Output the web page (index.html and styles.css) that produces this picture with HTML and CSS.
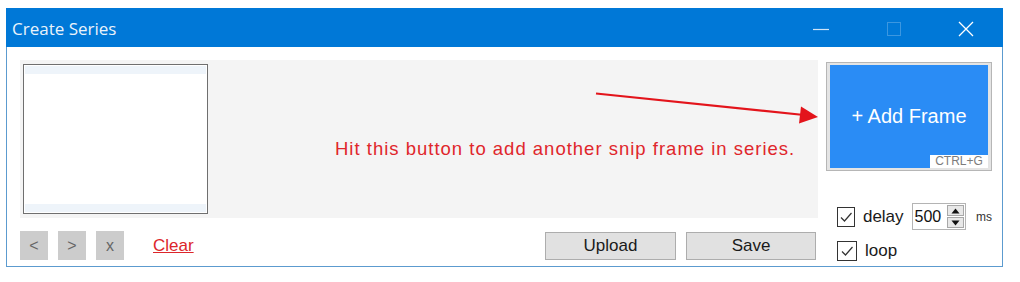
FILE: index.html
```html
<!DOCTYPE html>
<html lang="en">
<head>
<meta charset="utf-8">
<title>Create Series</title>
<link rel="stylesheet" href="styles.css">
</head>
<body>
<div class="window">
  <div class="titlebar">
    <span class="title">Create Series</span>
    <div class="controls">
      <span class="ctl ctl-min"><svg width="16" height="16" viewBox="0 0 16 16"><path d="M0 8.5H16" stroke="#cfe4f7" stroke-width="1.2"/></svg></span>
      <span class="ctl ctl-max"><svg width="16" height="16" viewBox="0 0 16 16"><rect x="1.5" y="1.5" width="13" height="13" fill="none" stroke="#3c97e0" stroke-width="1"/></svg></span>
      <span class="ctl ctl-close"><svg width="16" height="16" viewBox="0 0 16 16"><path d="M1 1L15 15M15 1L1 15" stroke="#ffffff" stroke-width="1.3"/></svg></span>
    </div>
  </div>
  <div class="content">
    <div class="main">
      <div class="panel">
        <div class="listbox">
          <div class="lb-strip"></div>
          <div class="lb-strip"></div>
        </div>
        <p class="hint">Hit this button to add another snip frame in series.</p>
        <svg class="arrow" width="800" height="70" viewBox="0 0 800 70">
          <path d="M576 33.5L784 55" stroke="#e3141b" stroke-width="2.2" fill="none"/>
          <path d="M798 57L779 63.5L781 46.5Z" fill="#e3141b"/>
        </svg>
      </div>
      <div class="actions">
        <button class="nav-btn">&lt;</button>
        <button class="nav-btn">&gt;</button>
        <button class="nav-btn">x</button>
        <a class="clear-link" href="#">Clear</a>
        <button class="std-btn upload-btn">Upload</button>
        <button class="std-btn save-btn">Save</button>
      </div>
    </div>
    <div class="side">
      <div class="add-frame-wrap">
        <button class="add-frame">+ Add Frame<span class="shortcut">CTRL+G</span></button>
      </div>
      <div class="options">
        <div class="opt-row">
          <span class="checkbox"><svg width="14" height="14" viewBox="0 0 14 14"><path d="M2 7.5L5.5 11L12.5 3" stroke="#333" stroke-width="1.2" fill="none"/></svg></span>
          <span class="opt-label">delay</span>
          <div class="spin">
            <span class="spin-value">500</span>
            <span class="spin-btns">
              <span class="spin-btn"><svg width="9" height="6" viewBox="0 0 9 6"><path d="M0.5 5.5L4.5 0.5L8.5 5.5Z" fill="#111"/></svg></span>
              <span class="spin-btn"><svg width="9" height="6" viewBox="0 0 9 6"><path d="M0.5 0.5L4.5 5.5L8.5 0.5Z" fill="#111"/></svg></span>
            </span>
          </div>
          <span class="unit">ms</span>
        </div>
        <div class="opt-row">
          <span class="checkbox"><svg width="14" height="14" viewBox="0 0 14 14"><path d="M2 7.5L5.5 11L12.5 3" stroke="#333" stroke-width="1.2" fill="none"/></svg></span>
          <span class="opt-label">loop</span>
        </div>
      </div>
    </div>
  </div>
</div>
</body>
</html>
```
FILE: styles.css
```css
* { box-sizing: border-box; }
html, body { margin: 0; padding: 0; background: #ffffff; }
body { font-family: "Liberation Sans", Arial, sans-serif; }

.window {
  margin: 8px 0 0 6px;
  width: 997px;
  height: 259px;
  border: 1px solid #5c9bcf;
  border-top: none;
  display: flex;
  flex-direction: column;
  background: #ffffff;
}

.titlebar {
  height: 39px;
  margin: 0 -1px;
  background: #0078d7;
  display: flex;
  align-items: center;
  padding: 2px 0 0 6px;
}
.title {
  font-family: "Open Sans", "Noto Sans", sans-serif;
  font-size: 17px;
  color: #eaf3fb;
  flex: 1;
}
.controls { display: flex; height: 100%; }
.ctl { display: flex; align-items: center; justify-content: center; }
.ctl-min { width: 16px; margin-right: 57px; }
.ctl-max { width: 16px; margin-right: 56px; }
.ctl-close { width: 16px; margin-right: 29px; }

.content {
  flex: 1;
  display: flex;
  padding: 13px 10px 0 13px;
  gap: 8px;
}

.main { width: 798px; display: flex; flex-direction: column; }

.panel {
  position: relative;
  height: 158px;
  background: #f4f4f4;
  display: flex;
  align-items: flex-start;
  padding: 4px 0 0 3px;
}
.listbox {
  width: 185px;
  height: 150px;
  border: 1px solid #6f6f6f;
  background: #ffffff;
  display: flex;
  flex-direction: column;
  justify-content: space-between;
  padding: 1px;
}
.lb-strip { height: 8px; background: #eef4fa; }

.hint {
  margin: 74px 0 0 127px;
  font-size: 18.5px;
  letter-spacing: 1px;
  line-height: 22px;
  color: #e0262b;
  white-space: nowrap;
}
.arrow {
  position: absolute;
  left: 0;
  top: 0;
  overflow: visible;
}

.actions {
  margin-top: 13px;
  display: flex;
  align-items: center;
  padding-right: 2px;
}
.nav-btn {
  width: 28px;
  height: 29px;
  margin-right: 10px;
  border: none;
  background: #cccccc;
  color: #666666;
  font-family: "Liberation Sans", Arial, sans-serif;
  font-size: 16px;
  padding: 0;
}
.clear-link {
  margin-left: 19px;
  font-size: 17px;
  color: #dc262b;
  text-decoration: underline;
}
.std-btn {
  height: 28px;
  border: 1px solid #adadad;
  background: #e1e1e1;
  color: #1a1a1a;
  font-family: "Liberation Sans", Arial, sans-serif;
  font-size: 17px;
  padding: 0;
}
.upload-btn { width: 131px; margin-left: auto; }
.save-btn { width: 130px; margin-left: 10px; }

.side { width: 166px; display: flex; flex-direction: column; }

.add-frame-wrap {
  margin-top: 2px;
  height: 109px;
  border: 1px solid #b6b6b6;
  background: #e4e4e4;
  padding: 2px 3px;
}
.add-frame {
  position: relative;
  width: 100%;
  height: 100%;
  border: none;
  background: #2a8cf5;
  color: #ffffff;
  font-family: "Liberation Sans", Arial, sans-serif;
  font-size: 20px;
  padding: 0 0 1px 0;
}
.shortcut {
  position: absolute;
  right: 0;
  bottom: 0;
  width: 58px;
  height: 13px;
  background: #ffffff;
  color: #7c7c7c;
  font-size: 12px;
  line-height: 13px;
  text-align: center;
}

.options {
  margin-top: 32px;
  display: flex;
  flex-direction: column;
  gap: 7px;
  padding-left: 11px;
}
.opt-row { display: flex; align-items: center; height: 27px; }
.checkbox {
  width: 20px;
  height: 20px;
  border: 1px solid #333333;
  background: #ffffff;
  display: flex;
  align-items: center;
  justify-content: center;
}
.opt-label {
  margin-left: 8px;
  font-size: 17px;
  color: #1a1a1a;
}
.spin {
  margin-left: 8px;
  width: 61px;
  height: 27px;
  border: 1px solid #b4b4b4;
  background: #ffffff;
  display: flex;
  align-items: center;
  padding-left: 2px;
}
.spin-value { font-size: 16px; color: #111; flex: 1; }
.spin-btns {
  display: flex;
  flex-direction: column;
  gap: 1px;
  margin-right: 1px;
}
.spin-btn {
  width: 17px;
  height: 11px;
  border: 1px solid #a8a8a8;
  background: #e8e8e8;
  display: flex;
  align-items: center;
  justify-content: center;
}
.unit {
  margin-left: 10px;
  font-size: 12px;
  color: #333;
}
```
